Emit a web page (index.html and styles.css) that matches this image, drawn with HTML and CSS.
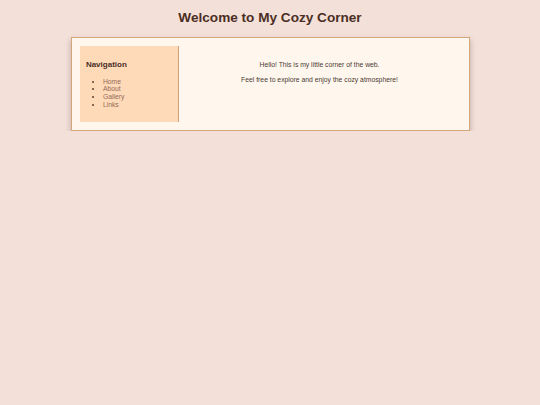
FILE: index.html
```html
<!DOCTYPE html>
<html lang="en">
<head>
<meta charset="utf-8">
<title>My Cozy Corner</title>
<link rel="stylesheet" href="styles.css">
</head>
<body>
<h1 class="page-title">Welcome to My Cozy Corner</h1>
<div class="container">
  <nav class="sidebar">
    <h3 class="nav-title">Navigation</h3>
    <ul class="nav-list">
      <li><a href="#" class="nav-link">Home</a></li>
      <li><a href="#" class="nav-link">About</a></li>
      <li><a href="#" class="nav-link">Gallery</a></li>
      <li><a href="#" class="nav-link">Links</a></li>
    </ul>
  </nav>
  <main class="content">
    <p class="text">Hello! This is my little corner of the web.</p>
    <p class="text">Feel free to explore and enjoy the cozy atmosphere!</p>
  </main>
</div>
</body>
</html>
```
FILE: styles.css
```css
html, body {
  margin: 0;
  padding: 0;
}
body {
  background: #f3e0d8;
  font-family: "Liberation Sans", Arial, sans-serif;
  font-size: 6.8px;
  line-height: 7.8px;
  color: #4a3a33;
}
.page-title {
  font-size: 13.6px;
  line-height: 16px;
  font-weight: bold;
  color: #4b2e24;
  text-align: center;
  margin: 10px 0 11px;
}
.container {
  box-sizing: border-box;
  width: 399px;
  margin: 0 auto;
  display: flex;
  padding: 8px;
  background: #fff7ee;
  border: 1.5px solid #d6a57a;
  box-shadow: 0 3px 6px rgba(0, 0, 0, 0.25);
}
.sidebar {
  box-sizing: border-box;
  flex: 0 0 99px;
  background: #ffdab9;
  border-right: 1.5px solid #d4a176;
  padding: 6.4px;
}
.nav-title {
  font-size: 8px;
  line-height: 9.2px;
  font-weight: bold;
  color: #4a2f25;
  margin: 8px 0;
}
.nav-list {
  margin: 8px 0 6.8px;
  padding-left: 17px;
  color: #5a4035;
}
.nav-link {
  color: #946b58;
  text-decoration: none;
}
.content {
  flex: 1;
  padding: 8.5px;
  text-align: center;
}
.text {
  margin: 6.8px 0;
}
```
